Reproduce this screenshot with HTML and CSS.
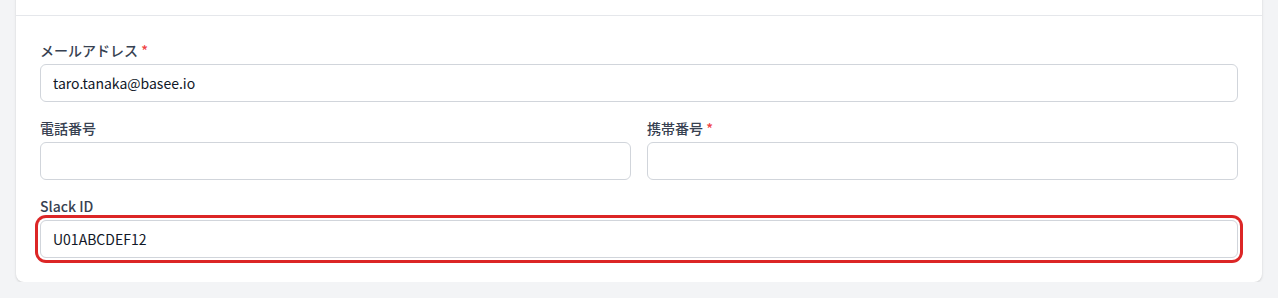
FILE: index.html
```html
<!DOCTYPE html>
<html lang="ja">
<head>
    <meta charset="UTF-8">
    <meta name="viewport" content="width=device-width, initial-scale=1.0">
    <title>プロフィール編集</title>
    <link rel="stylesheet" href="styles.css">
</head>
<body>
    <div class="card">
        <div class="card-header"></div>
        <div class="card-body">
            <div class="field">
                <label class="label">メールアドレス <span class="req">*</span></label>
                <input class="input" type="text" value="taro.tanaka@basee.io">
            </div>
            <div class="row">
                <div class="field">
                    <label class="label">電話番号</label>
                    <input class="input" type="text" value="">
                </div>
                <div class="field">
                    <label class="label">携帯番号 <span class="req">*</span></label>
                    <input class="input" type="text" value="">
                </div>
            </div>
            <div class="field">
                <label class="label">Slack ID</label>
                <input class="input focused" type="text" value="U01ABCDEF12">
            </div>
        </div>
    </div>
</body>
</html>
```

FILE: styles.css
```css
* {
    box-sizing: border-box;
}
body {
    margin: 0;
    padding: 0 16px;
    background-color: #f3f4f6;
    font-family: "Noto Sans CJK JP", "Noto Sans", sans-serif;
    color: #111827;
}
.card {
    margin-top: -20px;
    background: #fff;
    border-radius: 8px;
    box-shadow: 0 1px 3px rgba(0, 0, 0, 0.1), 0 1px 2px rgba(0, 0, 0, 0.06);
}
.card-header {
    height: 36px;
    border-bottom: 1px solid #e5e7eb;
}
.card-body {
    padding: 24px;
    display: flex;
    flex-direction: column;
    gap: 16px;
}
.row {
    display: grid;
    grid-template-columns: 1fr 1fr;
    gap: 16px;
}
.field {
    display: flex;
    flex-direction: column;
}
.label {
    font-size: 14px;
    font-weight: 500;
    line-height: 20px;
    color: #374151;
    margin-bottom: 4px;
}
.req {
    color: #ef4444;
}
.input {
    height: 38px;
    width: 100%;
    border: 1px solid #d1d5db;
    border-radius: 6px;
    padding: 0 12px;
    font-family: inherit;
    font-size: 14px;
    color: #111827;
    background: #fff;
    outline: none;
}
.input.focused {
    box-shadow: 0 0 0 2px #fff, 0 0 0 5px #dc2626;
}
```
